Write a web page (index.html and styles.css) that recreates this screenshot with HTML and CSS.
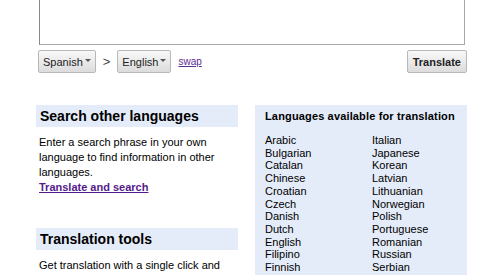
FILE: index.html
```html
<!DOCTYPE html>
<html lang="en">
<head>
    <meta charset="UTF-8">
    <title>Google Translate</title>
    <link rel="stylesheet" href="styles.css">
</head>
<body>

<div class="page">
    <div class="source">
        <textarea class="source-text"></textarea>
    </div>

    <div class="controls">
        <div class="langs">
            <button class="select">Spanish <span class="arrow"></span></button>
            <span class="gt">&gt;</span>
            <button class="select">English <span class="arrow"></span></button>
            <a href="#" class="swap">swap</a>
        </div>
        <button class="translate">Translate</button>
    </div>

    <div class="columns">
        <div class="left">
            <div class="block">
                <h2 class="block-title">Search other languages</h2>
                <p>Enter a search phrase in your own language to find information in other languages.</p>
                <a href="#" class="bold-link">Translate and search</a>
            </div>
            <div class="block">
                <h2 class="block-title">Translation tools</h2>
                <p>Get translation with a single click and</p>
            </div>
        </div>

        <div class="available">
            <h3>Languages available for translation</h3>
            <div class="lang-list">
                <ul>
                    <li>Arabic</li>
                    <li>Bulgarian</li>
                    <li>Catalan</li>
                    <li>Chinese</li>
                    <li>Croatian</li>
                    <li>Czech</li>
                    <li>Danish</li>
                    <li>Dutch</li>
                    <li>English</li>
                    <li>Filipino</li>
                    <li>Finnish</li>
                </ul>
                <ul>
                    <li>Italian</li>
                    <li>Japanese</li>
                    <li>Korean</li>
                    <li>Latvian</li>
                    <li>Lithuanian</li>
                    <li>Norwegian</li>
                    <li>Polish</li>
                    <li>Portuguese</li>
                    <li>Romanian</li>
                    <li>Russian</li>
                    <li>Serbian</li>
                </ul>
            </div>
        </div>
    </div>
</div>

</body>
</html>
```

FILE: styles.css
```css
body {
    margin: 0;
    font-family: 'Liberation Sans', Arial, sans-serif;
    font-size: 11px;
    color: #000;
    background: #fff;
    overflow: hidden;
}

.page {
    width: 432px;
    margin-left: 36px;
}

/* Поле ввода */
.source {
    padding-left: 3px;
    margin-top: -60px;
}

.source-text {
    display: block;
    box-sizing: border-box;
    width: 426px;
    height: 105px;
    border: 1px solid #a8a8a8;
    border-top-color: #888;
    border-left-color: #888;
    resize: none;
    margin: 0;
}

.controls {
    display: flex;
    justify-content: space-between;
    align-items: center;
    margin-top: 5px;
    padding-left: 2px;
}

.langs {
    display: flex;
    align-items: center;
}

.select,
.translate {
    height: 23px;
    box-sizing: border-box;
    border: 1px solid #b8b8b8;
    border-radius: 2px;
    background: linear-gradient(#f8f8f8, #dcdcdc);
    font-family: 'Liberation Sans', Arial, sans-serif;
    font-size: 11px;
    color: #222;
    margin: 0;
}

.select {
    display: flex;
    align-items: center;
    padding: 1px 4px 0 4px;
}

/* Стрелка выпадающего списка */
.arrow {
    display: inline-block;
    width: 0;
    height: 0;
    border-left: 3px solid transparent;
    border-right: 3px solid transparent;
    border-top: 3px solid #555;
    margin-left: 2px;
    margin-bottom: 4px;
}

.gt {
    font-size: 13px;
    color: #444;
    margin: 0 7px 0 7px;
}

.swap {
    font-size: 10px;
    color: #5b2d91;
    margin-left: 7px;
}

.translate {
    font-weight: bold;
    font-size: 11px;
    padding: 1px 5px 0;
    margin-right: 1px;
}

.columns {
    display: flex;
    align-items: flex-start;
    margin-top: 32px;
}

.left {
    width: 202px;
    margin-right: 17px;
}

.block {
    margin-bottom: 33px;
}

.block-title {
    background-color: #e5ecf9;
    font-size: 14px;
    font-weight: bold;
    margin: 0;
    padding: 3px 4px 3px;
    line-height: 16px;
}

.block p {
    margin: 8px 0 0;
    padding-left: 3px;
    line-height: 15px;
}

.bold-link {
    display: inline-block;
    margin-left: 3px;
    font-weight: bold;
    color: #551a8b;
    line-height: 15px;
}

.available {
    width: 212px;
    box-sizing: border-box;
    background-color: #e5ecf9;
    padding: 5px 10px 10px;
}

.available h3 {
    font-size: 11px;
    letter-spacing: 0.15px;
    margin: 0 0 12px;
}

.lang-list {
    display: flex;
}

.lang-list ul {
    list-style: none;
    margin: 0;
    padding: 0;
    width: 107px;
    flex-shrink: 0;
}

.lang-list li {
    line-height: 12.7px;
}
```
